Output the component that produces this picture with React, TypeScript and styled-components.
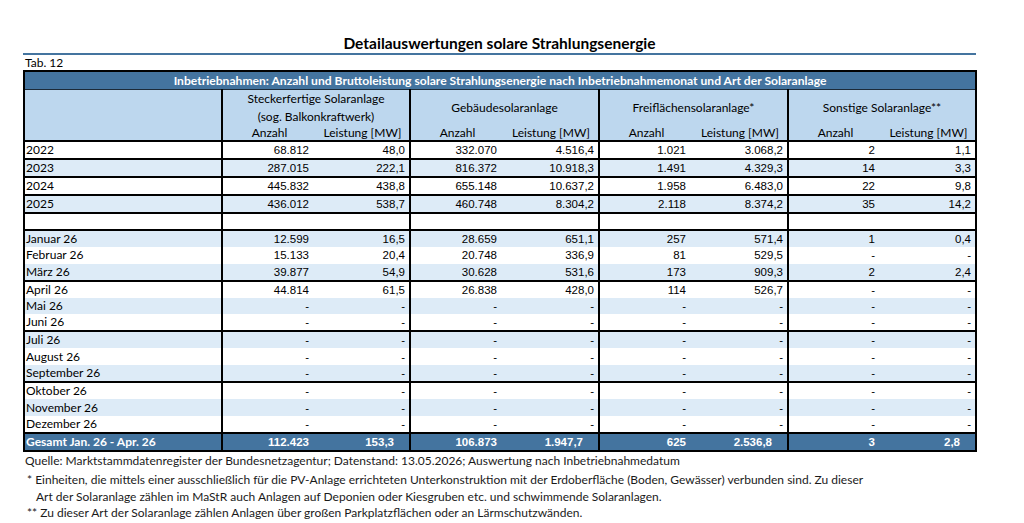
import React from "react";
import styled, { createGlobalStyle } from "styled-components";

const BLUE = "#44749f";
const LIGHT = "#bdd7ee";
const STRIPE = "#ddebf7";
const LABEL_FONT = `Lato, "Noto Sans", sans-serif`;
const NUM_FONT = `"Liberation Sans", Arial, sans-serif`;

const GlobalStyle = createGlobalStyle`
  body {
    margin: 0;
    background: #fff;
    color: #000;
    font-family: ${LABEL_FONT};
  }
`;

const Page = styled.div`
  width: 953px;
  margin-left: 23px;
  padding-top: 34px;
`;

const Title = styled.h1`
  margin: 0;
  font-size: 15.5px;
  line-height: 19px;
  font-weight: 700;
  text-align: center;
  border-bottom: 2px solid ${BLUE};
`;

const TabLabel = styled.div`
  font-size: 12px;
  line-height: 15px;
  padding-left: 2px;
`;

const Table = styled.table`
  border-collapse: collapse;
  table-layout: fixed;
  width: 953px;
  border: 2px solid #000;
`;

const Banner = styled.th`
  background: ${BLUE};
  color: #fff;
  font-weight: 700;
  font-size: 12.1px;
  line-height: 16px;
  height: 17px;
  padding: 0;
  text-align: center;
  border-bottom: 1px solid #1c2a38;
`;

const HeadCell = styled.th<{ $edge?: boolean; $rule?: boolean }>`
  background: ${LIGHT};
  font-weight: 400;
  font-size: 12px;
  line-height: 15px;
  padding: 0;
  text-align: center;
  vertical-align: middle;
  border-right: ${(p) => (p.$edge ? "2px solid #000" : "none")};
  border-bottom: ${(p) => (p.$rule ? "2px solid #000" : "none")};
`;

const GroupLine = styled.div`
  line-height: 17.5px;
`;

const GroupRow = styled.tr`
  height: 35px;
`;

const SubRow = styled.tr`
  height: 15px;
`;

const Row = styled.tr<{ $stripe: boolean; $rule: boolean; $total?: boolean }>`
  height: 16.8px;
  background: ${(p) => (p.$total ? BLUE : p.$stripe ? STRIPE : "#fff")};
  color: ${(p) => (p.$total ? "#fff" : "#000")};
  border-bottom: ${(p) => (p.$rule ? "2px solid #000" : "none")};
`;

const LabelCell = styled.td<{ $bold?: boolean }>`
  font-family: ${LABEL_FONT};
  font-size: 12px;
  font-weight: ${(p) => (p.$bold ? 700 : 400)};
  padding: 0 0 0 1px;
  line-height: 16px;
  white-space: nowrap;
  border-right: 2px solid #000;
`;

const NumCell = styled.td<{ $end?: boolean; $bold?: boolean; $pad: number }>`
  font-family: ${NUM_FONT};
  font-size: 11.5px;
  font-weight: ${(p) => (p.$bold ? 700 : 400)};
  text-align: right;
  padding: 0 ${(p) => p.$pad}px 0 0;
  line-height: 16px;
  white-space: nowrap;
  border-right: ${(p) => (p.$end ? "2px solid #000" : "none")};
`;

const Notes = styled.div`
  font-size: 12px;
  color: #1a1a1a;
  padding-left: 2px;
`;

const Source = styled.p`
  margin: 0 0 2px;
  line-height: 18px;
`;

const Note = styled.p`
  margin: 0;
  line-height: 16.7px;
  padding-left: 11px;
  text-indent: -9px;
  white-space: nowrap;
`;

const widths = [198, 94, 94, 94, 95, 94, 95, 94, 94];

const groups = [
  ["Steckerfertige Solaranlage", "(sog. Balkonkraftwerk)"],
  ["Gebäudesolaranlage"],
  ["Freiflächensolaranlage*"],
  ["Sonstige Solaranlage**"],
];

const D = "-";
const empty = [D, D, D, D, D, D, D, D];

type Line = { label: string; values: string[]; rule: boolean };

const lines: Line[] = [
  { label: "2022", values: ["68.812", "48,0", "332.070", "4.516,4", "1.021", "3.068,2", "2", "1,1"], rule: true },
  { label: "2023", values: ["287.015", "222,1", "816.372", "10.918,3", "1.491", "4.329,3", "14", "3,3"], rule: true },
  { label: "2024", values: ["445.832", "438,8", "655.148", "10.637,2", "1.958", "6.483,0", "22", "9,8"], rule: true },
  { label: "2025", values: ["436.012", "538,7", "460.748", "8.304,2", "2.118", "8.374,2", "35", "14,2"], rule: true },
  { label: "", values: ["", "", "", "", "", "", "", ""], rule: true },
  { label: "Januar 26", values: ["12.599", "16,5", "28.659", "651,1", "257", "571,4", "1", "0,4"], rule: false },
  { label: "Februar 26", values: ["15.133", "20,4", "20.748", "336,9", "81", "529,5", D, D], rule: false },
  { label: "März 26", values: ["39.877", "54,9", "30.628", "531,6", "173", "909,3", "2", "2,4"], rule: true },
  { label: "April 26", values: ["44.814", "61,5", "26.838", "428,0", "114", "526,7", D, D], rule: false },
  { label: "Mai 26", values: empty, rule: false },
  { label: "Juni 26", values: empty, rule: true },
  { label: "Juli 26", values: empty, rule: false },
  { label: "August 26", values: empty, rule: false },
  { label: "September 26", values: empty, rule: true },
  { label: "Oktober 26", values: empty, rule: false },
  { label: "November 26", values: empty, rule: false },
  { label: "Dezember 26", values: empty, rule: true },
];

const total = ["112.423", "153,3", "106.873", "1.947,7", "625", "2.536,8", "3", "2,8"];

export default function App() {
  return (
    <>
      <GlobalStyle />
      <Page>
        <Title>Detailauswertungen solare Strahlungsenergie</Title>
        <TabLabel>Tab. 12</TabLabel>
        <Table>
          <colgroup>
            {widths.map((w, i) => (
              <col key={i} style={{ width: w }} />
            ))}
          </colgroup>
          <thead>
            <tr>
              <Banner colSpan={9}>
                Inbetriebnahmen: Anzahl und Bruttoleistung solare Strahlungsenergie nach
                Inbetriebnahmemonat und Art der Solaranlage
              </Banner>
            </tr>
            <GroupRow>
              <HeadCell rowSpan={2} $edge $rule />
              {groups.map((g) => (
                <HeadCell key={g[0]} colSpan={2} $edge>
                  {g.map((t) => (
                    <GroupLine key={t}>{t}</GroupLine>
                  ))}
                </HeadCell>
              ))}
            </GroupRow>
            <SubRow>
              {groups.map((g) => (
                <React.Fragment key={g[0]}>
                  <HeadCell $rule>Anzahl</HeadCell>
                  <HeadCell $rule $edge>
                    Leistung [MW]
                  </HeadCell>
                </React.Fragment>
              ))}
            </SubRow>
          </thead>
          <tbody>
            {lines.map((l, i) => (
              <Row key={i} $stripe={i % 2 === 1} $rule={l.rule}>
                <LabelCell>{l.label}</LabelCell>
                {l.values.map((v, j) => (
                  <NumCell key={j} $end={j % 2 === 1} $pad={j % 2 === 1 ? 4 : 7}>
                    {v}
                  </NumCell>
                ))}
              </Row>
            ))}
            <Row $stripe={false} $rule={false} $total>
              <LabelCell $bold>Gesamt Jan. 26 - Apr. 26</LabelCell>
              {total.map((v, j) => (
                <NumCell key={j} $bold $end={j % 2 === 1} $pad={j % 2 === 1 ? 15 : 7}>
                  {v}
                </NumCell>
              ))}
            </Row>
          </tbody>
        </Table>
        <Notes>
          <Source>
            Quelle: Marktstammdatenregister der Bundesnetzagentur; Datenstand: 13.05.2026;
            Auswertung nach Inbetriebnahmedatum
          </Source>
          <Note>
            * Einheiten, die mittels einer ausschließlich für die PV-Anlage errichteten
            Unterkonstruktion mit der Erdoberfläche (Boden, Gewässer) verbunden sind. Zu dieser
            <br />
            Art der Solaranlage zählen im MaStR auch Anlagen auf Deponien oder Kiesgruben etc. und
            schwimmende Solaranlagen.
          </Note>
          <Note>
            ** Zu dieser Art der Solaranlage zählen Anlagen über großen Parkplatzflächen oder an
            Lärmschutzwänden.
          </Note>
        </Notes>
      </Page>
    </>
  );
}
